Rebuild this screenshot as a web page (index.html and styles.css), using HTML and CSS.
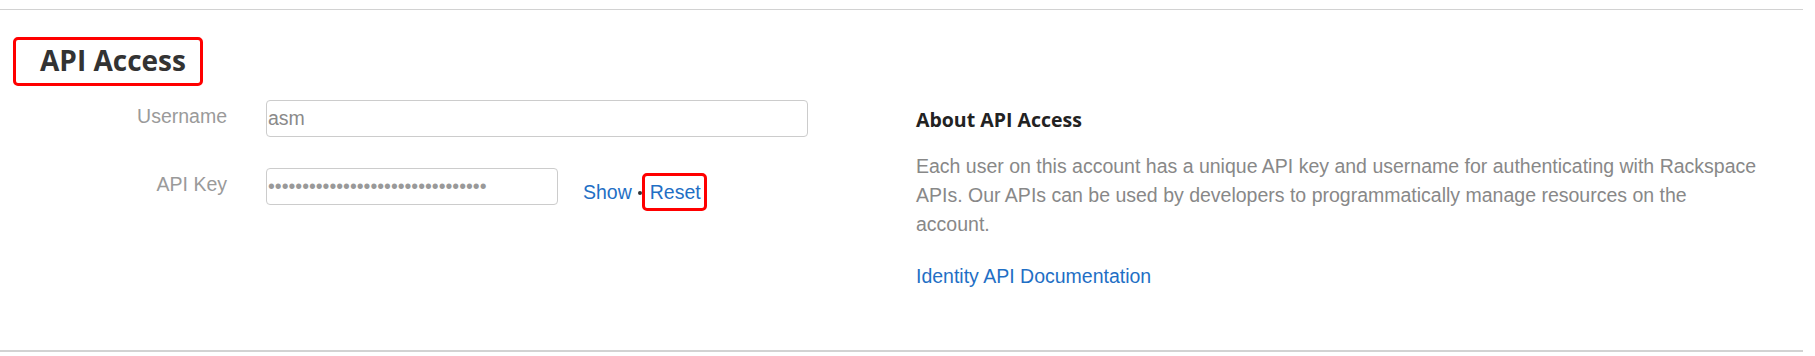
FILE: index.html
```html
<!DOCTYPE html>
<html lang="en">
<head>
    <meta charset="UTF-8">
    <title>API Access</title>
    <link rel="stylesheet" href="styles.css">
</head>
<body>
<section class="api-section">
    <h2 class="section-title">API Access</h2>

    <div class="api-content">
        <div class="api-form">
            <div class="form-row">
                <label class="form-label" for="username">Username</label>
                <input class="form-input username-input" id="username" type="text" value="asm" readonly>
            </div>
            <div class="form-row key-row">
                <label class="form-label" for="apikey">API Key</label>
                <input class="form-input key-input" id="apikey" type="password" value="aaaaaaaaaaaaaaaaaaaaaaaaaaaaaaaa" readonly>
                <div class="key-actions">
                    <a href="#" class="action-link">Show</a>
                    <span class="action-sep"></span>
                    <a href="#" class="action-link reset-link">Reset</a>
                </div>
            </div>
        </div>

        <div class="about">
            <h3>About API Access</h3>
            <p>Each user on this account has a unique API key and username for authenticating with Rackspace APIs. Our APIs can be used by developers to programmatically manage resources on the account.</p>
            <a href="#" class="doc-link">Identity API Documentation</a>
        </div>
    </div>
</section>
</body>
</html>
```

FILE: styles.css
```css
/* Global */
body {
    margin: 0;
    padding: 0;
    background-color: #fff;
    font-family: "Liberation Sans", Arial, sans-serif;
    font-size: 19.5px;
}

a {
    color: #1f6fc5;
    text-decoration: none;
}

/* Section frame */
.api-section {
    margin: 9px 12px 0 0;
    border-top: 1px solid #d2d2d2;
    border-bottom: 2px solid #d2d2d2;
    padding-bottom: 58px;
}

.section-title {
    width: fit-content;
    margin: 27px 0 14px 13px;
    padding: 1px 14px 4px 24px;
    border: 3px solid #f00;
    border-radius: 5px;
    font-family: "Open Sans", sans-serif;
    font-size: 28px;
    font-weight: 700;
    line-height: 38px;
    color: #333;
}

.api-content {
    display: grid;
    grid-template-columns: 880px 1fr;
    column-gap: 36px;
    padding-right: 41px;
}

/* Form */
.form-row {
    display: flex;
    align-items: flex-start;
}

.key-row {
    margin-top: 31px;
}

.form-label {
    width: 227px;
    margin-right: 39px;
    padding-top: 5px;
    text-align: right;
    line-height: 22px;
    color: #9a9a9a;
}

.form-input {
    box-sizing: border-box;
    height: 37px;
    margin: 0;
    padding: 0 0 0 1px;
    border: 1px solid #ccc;
    border-radius: 4px;
    font-family: "Liberation Sans", Arial, sans-serif;
    font-size: 19.5px;
    color: #8a8a8a;
    background: #fff;
    outline: none;
}

.username-input {
    width: 542px;
}

.key-input {
    width: 292px;
    color: #999;
}

.key-actions {
    display: flex;
    align-items: baseline;
    margin: 5px 0 0 25px;
}

.action-link {
    line-height: 22px;
}

.action-sep {
    width: 4px;
    height: 4px;
    margin: 0 0 0 6px;
    border-radius: 50%;
    background-color: #333;
    align-self: center;
    position: relative;
    top: 1px;
}

.reset-link {
    padding: 5px 3px 5px 5px;
    border: 3px solid #f00;
    border-radius: 5px;
}

/* About column */
.about {
    padding-top: 7px;
}

.about h3 {
    margin: 0;
    font-family: "Open Sans", sans-serif;
    font-size: 19.5px;
    font-weight: 700;
    line-height: 26.5px;
    color: #222;
}

.about p {
    margin: 18px 0 0;
    line-height: 29.25px;
    color: #888;
}

.doc-link {
    display: inline-block;
    margin-top: 23px;
    line-height: 29.25px;
}
```
